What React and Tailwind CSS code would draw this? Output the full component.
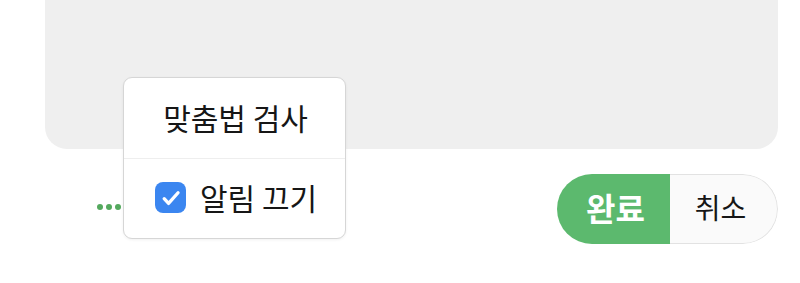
const font = { fontFamily: '"Noto Sans CJK KR", "Noto Sans", sans-serif' };

const CheckIcon = () => (
  <span className="flex h-[31px] w-[31px] items-center justify-center rounded-[8px] bg-[#3b86f0]">
    <svg width="22" height="22" viewBox="0 0 20 20" fill="none">
      <path
        d="M3.8 10.6l4 4.3L16.4 5.2"
        stroke="white"
        strokeWidth="3"
        strokeLinecap="round"
        strokeLinejoin="round"
      />
    </svg>
  </span>
);

const App = () => {
  return (
    <div
      className="relative h-[283px] w-[800px] overflow-hidden bg-white text-[#161616]"
      style={font}
    >
      <div className="ml-[45px] mr-[22px] h-[149px] rounded-b-[22px] bg-[#efefef]" />

      <div className="mt-[25px] flex items-center justify-between pl-[97px] pr-[22px]">
        <div className="flex gap-[3px] pb-[4px]">
          <span className="h-[6px] w-[6px] rounded-full bg-[#54a95e]" />
          <span className="h-[6px] w-[6px] rounded-full bg-[#54a95e]" />
          <span className="h-[6px] w-[6px] rounded-full bg-[#54a95e]" />
        </div>

        <div className="flex h-[70px] overflow-hidden rounded-full">
          <button className="flex w-[113px] items-center justify-center bg-[#5cb96e] pb-[4px] pl-[4px] text-[32px] font-bold text-white">
            완료
          </button>
          <button className="flex w-[108px] items-center justify-center rounded-r-full border-[1.5px] border-l-0 border-[#e2e2e2] bg-[#fafafa] pb-[4px] pr-[6px] text-[28px]">
            취소
          </button>
        </div>
      </div>

      <div className="absolute left-[123px] top-[77px] flex h-[162px] w-[223px] flex-col rounded-[9px] border-[1.5px] border-[#d6d6d6] bg-white shadow-[0_1px_3px_rgba(0,0,0,0.06)]">
        <div className="flex h-[81px] items-center justify-center border-b-[1.5px] border-[#eeeeee] pb-[2px] pl-[2px] text-[30px]">
          맞춤법 검사
        </div>
        <div className="flex flex-1 items-center gap-[14px] pl-[31px] pb-[2px] text-[30px]">
          <CheckIcon />
          <span>알림 끄기</span>
        </div>
      </div>
    </div>
  );
};

export default App;
